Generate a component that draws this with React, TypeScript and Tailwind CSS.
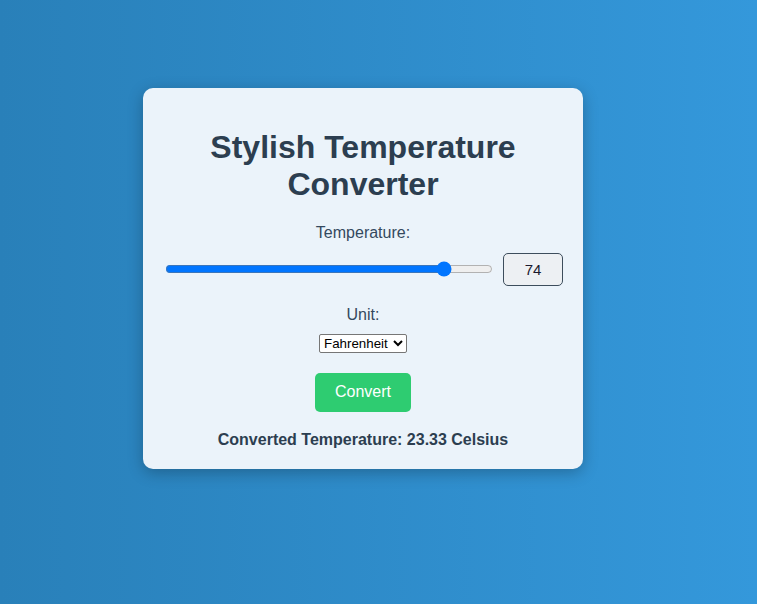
import React, { useState } from "react";

export default function App() {
  const [temp, setTemp] = useState(74);
  return (
    <div
      className="min-h-screen w-full bg-gradient-to-r from-[#2980b9] to-[#3498db] pt-[88px] pl-[143px]"
      style={{ fontFamily: '"Liberation Sans", Arial, sans-serif' }}
    >
      <div className="w-[440px] rounded-[10px] bg-[#ebf3fa] p-5 text-center text-[#2c3e50] shadow-[0_4px_15px_rgba(0,0,0,0.25)]">
        <h1 className="my-[21.44px] text-[32px] font-bold leading-[36.8px]">
          Stylish Temperature Converter
        </h1>
        <label className="mb-[10px] block text-base leading-[18.4px] text-[#34495e]">Temperature:</label>
        <div className="mb-5 flex h-[33px] items-center">
          <input
            type="range"
            min={-100}
            max={100}
            value={temp}
            onChange={(e) => setTemp(Number(e.target.value))}
            className="mx-[2px] min-w-0 flex-1"
          />
          <input
            type="text"
            readOnly
            value={temp}
            className="ml-[8px] h-[33px] w-[60px] rounded-[5px] border border-[#3d4d5c] bg-[#edf0f3] text-center text-[15px] text-[#1a1a2e]"
          />
        </div>
        <label className="mb-[10px] block text-base leading-[18.4px] text-[#34495e]">Unit:</label>
        <div className="flex h-[19px] justify-center">
          <select
            defaultValue="fahrenheit"
            className="h-[19px] w-[88px] rounded-[2px] border border-[#767676] bg-white text-[13.33px] text-black"
            style={{ fontFamily: '"Liberation Sans", Arial, sans-serif' }}
          >
            <option value="celsius">Celsius</option>
            <option value="fahrenheit">Fahrenheit</option>
          </select>
        </div>
        <div className="mt-5 flex justify-center">
          <button className="rounded-[5px] bg-[#2ecc71] px-5 py-[10px] text-base leading-[18.4px] text-white">
            Convert
          </button>
        </div>
        <p className="mt-[19px] text-base font-bold leading-[18.4px]">
          Converted Temperature: 23.33 Celsius
        </p>
      </div>
    </div>
  );
}
